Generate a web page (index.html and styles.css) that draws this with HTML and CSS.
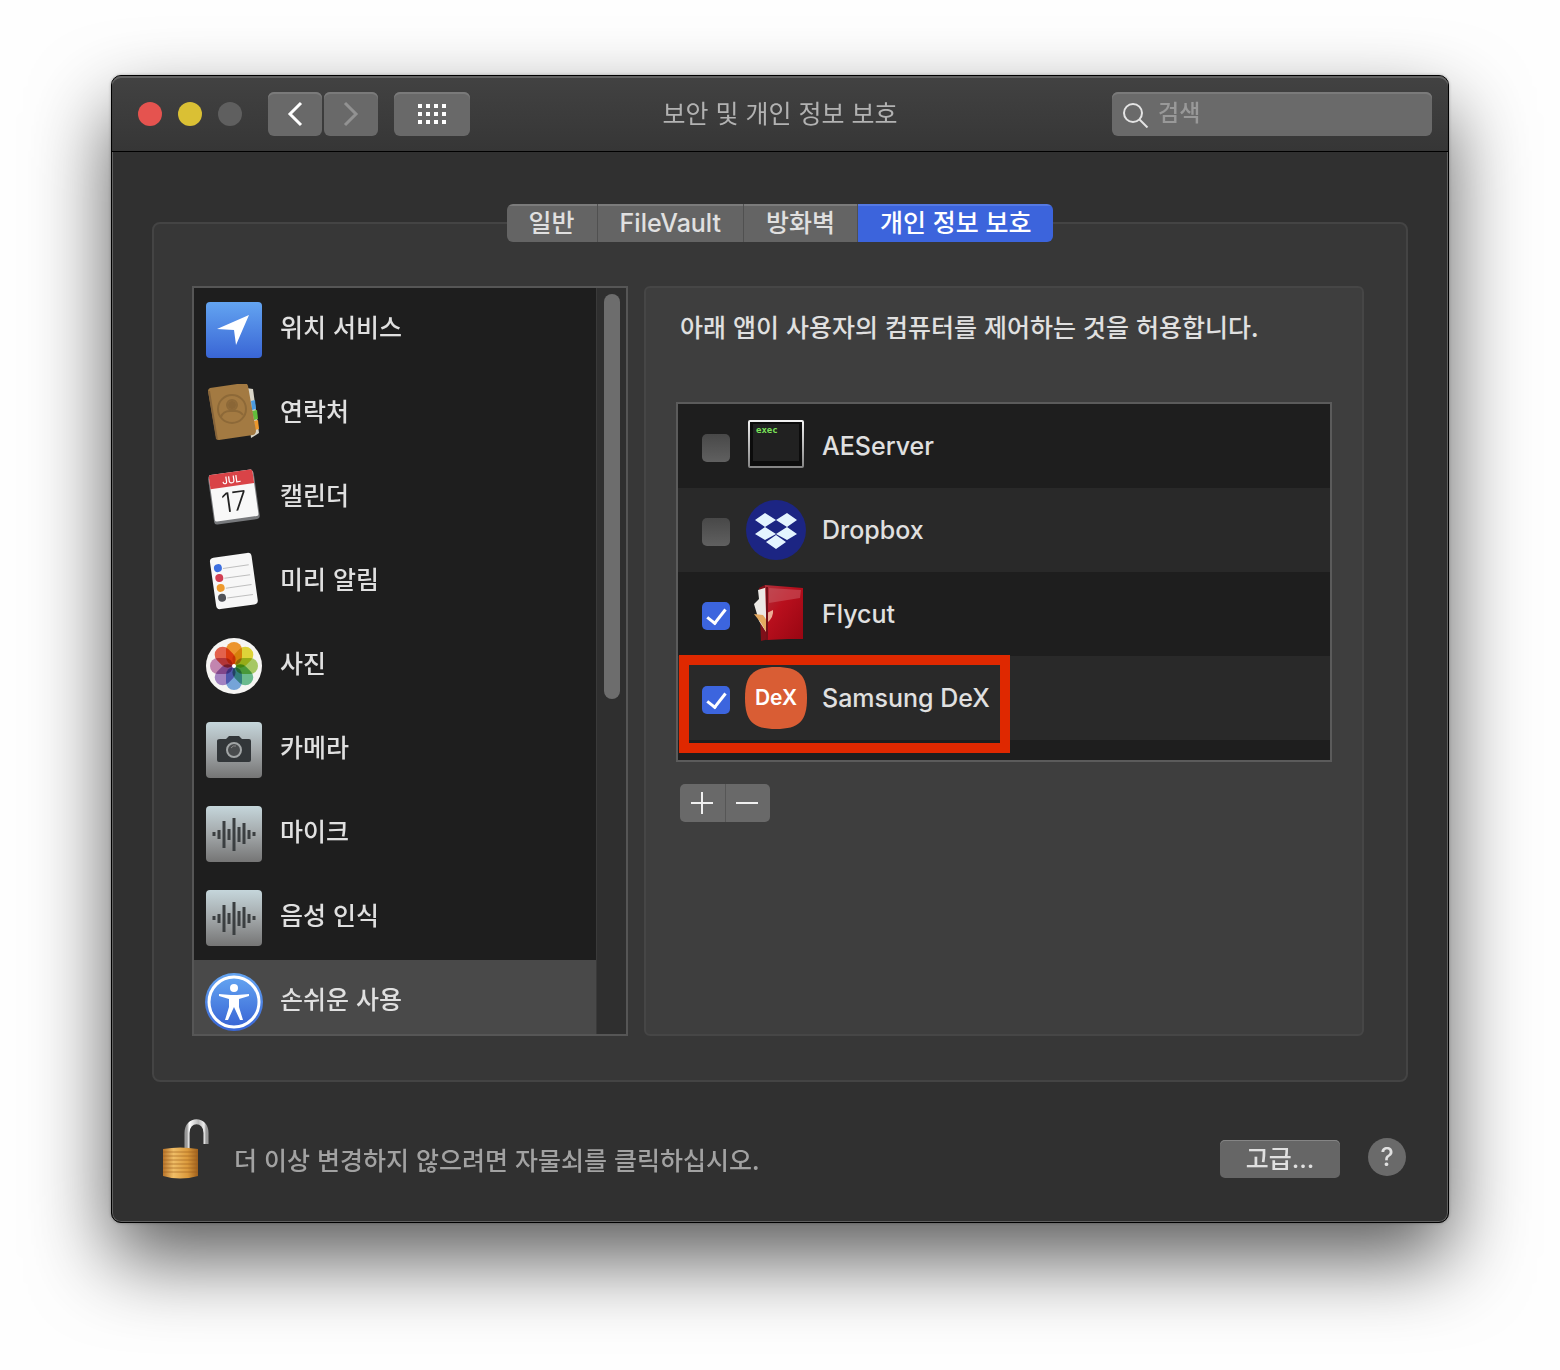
FILE: index.html
```html
<!DOCTYPE html>
<html lang="ko">
<head>
<meta charset="UTF-8">
<title>보안 및 개인 정보 보호</title>
<link rel="stylesheet" href="styles.css">
</head>
<body>
<div class="window">
	<header class="titlebar">
		<div class="controls">
			<div class="lights">
				<button type="button" class="light close" aria-label="닫기"></button>
				<button type="button" class="light minimize" aria-label="최소화"></button>
				<button type="button" class="light" aria-label="확대" disabled></button>
			</div>
			<div class="nav">
				<button type="button" class="navBtn" aria-label="뒤로">
					<svg width="18" height="28" viewBox="0 0 18 28"><path d="M15 3L4 14l11 11" fill="none" stroke="#fff" stroke-width="3"/></svg>
				</button>
				<button type="button" class="navBtn" aria-label="앞으로" disabled>
					<svg width="18" height="28" viewBox="0 0 18 28"><path d="M3 3l11 11L3 25" fill="none" stroke="#929292" stroke-width="3"/></svg>
				</button>
			</div>
			<button type="button" class="navBtn gridBtn" aria-label="모두 보기">
				<svg width="30" height="22" viewBox="0 0 30 22"><path d="M1 3h28M1 11h28M1 19h28" stroke="#fff" stroke-width="4" stroke-dasharray="4"/></svg>
			</button>
		</div>
		<h1 class="title">보안 및 개인 정보 보호</h1>
		<label class="search">
			<svg width="28" height="28" viewBox="0 0 28 28"><g fill="none" stroke="#e4e4e4" stroke-width="2"><circle cx="11" cy="13" r="9"/><path d="M17.500 19.500l8 8"/></g></svg>
			<input type="search" placeholder="검색" aria-label="검색">
		</label>
	</header>

	<main class="content">
		<div class="tabs">
			<button type="button" class="tab">일반</button>
			<button type="button" class="tab">FileVault</button>
			<button type="button" class="tab">방화벽</button>
			<button type="button" class="tab active">개인 정보 보호</button>
		</div>

		<section class="panel">
			<div class="sidebar">
				<ul class="services">
					<li><button type="button" class="service">
						<svg class="icon" viewBox="0 0 60 60">
							<defs><linearGradient id="blue" x2="0" y2="1"><stop stop-color="#63a4f1"/><stop offset="1" stop-color="#3965d5"/></linearGradient></defs>
							<rect x="2" y="2" width="56" height="56" rx="4" fill="url(#blue)"/>
							<path d="M45 15L13 29l17 1 2 15z" fill="#fff"/>
						</svg>
						<span>위치 서비스</span></button></li>
					<li><button type="button" class="service">
						<svg class="icon" viewBox="0 0 60 60">
							<path d="M42 4l7 1 6 44-8 5z" fill="#d9d5c8"/>
							<path d="M47 17l4-1 1 9-4 1z" fill="#4b9be0"/><path d="M48 27l5-1 1 9-4 1z" fill="#62bd3b"/>
							<path d="M50 37l4-1 1 9-4 1z" fill="#ec972c"/>
							<path d="M6 4l34-5q3 0 4 3l8 45q0 3-3 4l-34 5q-3 0-3-3L4 7q0-2 2-3z" fill="#a37a42"/>
							<path d="M4 7l8 48 2 1L6 7z" fill="#86643a"/>
							<g fill="none" stroke="#8d6938" stroke-width="2"><circle cx="28" cy="25" r="14"/><circle cx="28" cy="21" r="5"/><path d="M17 33q2-6 9-6h5q5 0 8 4"/></g>
							<circle cx="28" cy="21" r="4" fill="#8a6636"/>
						</svg>
						<span>연락처</span></button></li>
					<li><button type="button" class="service">
						<svg class="icon" viewBox="0 0 60 60">
							<g transform="rotate(-8 30 30)">
								<rect x="7" y="5" width="46" height="49" rx="3" fill="#77797c"/>
								<rect x="8" y="4" width="44" height="47" rx="2" fill="#f8f8f8"/>
								<path d="M8 18V6q0-2 2-2h40q2 0 2 2v12z" fill="#d94347"/>
								<text x="30" y="15" text-anchor="middle" class="calMonth">JUL</text>
								<text x="30" y="43" text-anchor="middle" class="calDay">17</text>
							</g>
						</svg>
						<span>캘린더</span></button></li>
					<li><button type="button" class="service">
						<svg class="icon" viewBox="0 0 60 60">
							<g transform="rotate(-8 30 30)">
								<rect x="9" y="3" width="42" height="52" rx="4" fill="#f7f7f7"/>
								<path d="M21 15h26M21 25h26M21 35h26M21 45h26" stroke="#bfbfbf"/>
								<circle cx="16" cy="14" r="4" fill="#3d6fe0"/><circle cx="16" cy="24" r="4" fill="#d23e52"/>
								<circle cx="16" cy="34" r="4" fill="#ee9a2d"/><circle cx="16" cy="44" r="4" fill="#505258"/>
							</g>
						</svg>
						<span>미리 알림</span></button></li>
					<li><button type="button" class="service">
						<svg class="icon" viewBox="0 0 60 60">
							<circle cx="30" cy="30" r="28" fill="#f6f5f3"/>
							<g class="petals">
								<rect x="22" y="6" width="16" height="23" rx="8" fill="#f59a2f"/>
								<rect x="22" y="6" width="16" height="23" rx="8" fill="#e6dc3c" transform="rotate(45 30 30)"/>
								<rect x="22" y="6" width="16" height="23" rx="8" fill="#acd068" transform="rotate(90 30 30)"/>
								<rect x="22" y="6" width="16" height="23" rx="8" fill="#6fc294" transform="rotate(135 30 30)"/>
								<rect x="22" y="6" width="16" height="23" rx="8" fill="#79abe3" transform="rotate(180 30 30)"/>
								<rect x="22" y="6" width="16" height="23" rx="8" fill="#a887cb" transform="rotate(225 30 30)"/>
								<rect x="22" y="6" width="16" height="23" rx="8" fill="#c98ab8" transform="rotate(270 30 30)"/>
								<rect x="22" y="6" width="16" height="23" rx="8" fill="#ec6650" transform="rotate(315 30 30)"/>
							</g>
							<circle cx="30" cy="30" r="2" fill="#fff"/>
						</svg>
						<span>사진</span></button></li>
					<li><button type="button" class="service">
						<svg class="icon" viewBox="0 0 60 60">
							<defs><linearGradient id="steel" x2="0" y2="1"><stop stop-color="#c5d6db"/><stop offset=".5" stop-color="#a3a8aa"/><stop offset="1" stop-color="#757575"/></linearGradient></defs>
							<rect x="2" y="2" width="56" height="56" rx="4" fill="url(#steel)"/>
							<path d="M16 19h6l3-3h10l3 3h7q2 0 2 2v19q0 2-2 2H15q-2 0-2-2V21q0-2 3-2z" fill="#323639"/>
							<circle cx="30" cy="30" r="7" fill="#484b4d" stroke="#a1a5a6" stroke-width="2"/>
							<path d="M27 28q2-3 5-2" fill="none" stroke="#888"/>
						</svg>
						<span>카메라</span></button></li>
					<li><button type="button" class="service">
						<svg class="icon" viewBox="0 0 60 60">
							<rect x="2" y="2" width="56" height="56" rx="4" fill="url(#steel)"/>
							<path class="wave" d="M10 28v4M15 26v9M20 17v27M25 25v11M30 14v33M35 23v15M40 19v21M45 26v9M50 28v4"/>
						</svg>
						<span>마이크</span></button></li>
					<li><button type="button" class="service">
						<svg class="icon" viewBox="0 0 60 60">
							<rect x="2" y="2" width="56" height="56" rx="4" fill="url(#steel)"/>
							<path class="wave" d="M10 28v4M15 26v9M20 17v27M25 25v11M30 14v33M35 23v15M40 19v21M45 26v9M50 28v4"/>
						</svg>
						<span>음성 인식</span></button></li>
					<li><button type="button" class="service selected">
						<svg class="icon" viewBox="0 0 60 60">
							<circle cx="30" cy="30" r="29" fill="url(#blue)"/>
							<circle cx="30" cy="30" r="25" fill="url(#blue)" stroke="#fff" stroke-width="3"/>
							<circle cx="30" cy="16" r="4" fill="#fff"/>
							<path d="M15 22l12 1h6l12-1v2l-10 3v8l4 13h-3l-6-13-6 13h-3l4-13v-8l-10-3z" fill="#fff"/>
						</svg>
						<span>손쉬운 사용</span></button></li>
				</ul>
				<div class="scrollbar"><div class="thumb"></div></div>
			</div>

			<div class="detail">
				<p class="guide">아래 앱이 사용자의 컴퓨터를 제어하는 것을 허용합니다.</p>
				<ul class="apps">
					<li class="app">
						<label>
							<input type="checkbox" class="check">
							<svg class="appIcon" viewBox="0 0 62 62">
								<defs><linearGradient id="frame" x2="0" y2="1"><stop stop-color="#f2f2f2"/><stop offset="1" stop-color="#858585"/></linearGradient></defs>
								<rect x="4" y="6" width="54" height="46" rx="1" fill="#0c0c0c" stroke="url(#frame)" stroke-width="2"/>
								<rect x="8" y="9" width="46" height="37" fill="#212121"/>
								<text x="11" y="18" class="exec">exec</text>
							</svg>
							<span>AEServer</span>
						</label>
					</li>
					<li class="app">
						<label>
							<input type="checkbox" class="check">
							<svg class="appIcon" viewBox="0 0 62 62">
								<circle cx="31" cy="31" r="30" fill="#1c2583"/>
								<path d="M20 14l11 7-11 7-10-7zM42 14l10 7-10 7-11-7zM20 28l11 7-11 6-10-6zM42 28l10 7-10 6-11-6zM31 36l10 7-10 7-10-7z" fill="#e4f4ff"/>
							</svg>
							<span>Dropbox</span>
						</label>
					</li>
					<li class="app">
						<label>
							<input type="checkbox" class="check" checked>
							<svg class="appIcon" viewBox="0 0 62 62">
								<defs><linearGradient id="red" x2="1" y2="1"><stop stop-color="#b0323c"/><stop offset=".4" stop-color="#b80f1d"/><stop offset="1" stop-color="#980612"/></linearGradient></defs>
								<path d="M14 5l6-3 4 54-8 2z" fill="#7f1019"/>
								<path d="M13 7l10-3v48L14 38l-5-17 5-5z" fill="#eceae6"/>
								<path d="M9 31l9 1 5 7v13l-7-12z" fill="#e5a960"/>
								<path d="M20 2l38 3v51H43l-21 1z" fill="url(#red)"/>
								<path d="M24 5l32 2-1 8-31 5z" fill="#cd6269" opacity=".5"/>
								<path d="M22 30l6-3q1 7-6 13z" fill="#ecac95"/>
								<path d="M22 4v53" stroke="#741018" stroke-width="2"/>
							</svg>
							<span>Flycut</span>
						</label>
					</li>
					<li class="app highlighted">
						<label>
							<input type="checkbox" class="check" checked>
							<svg class="appIcon" viewBox="0 0 62 62">
								<path d="M31 0C54 0 62 8 62 31S54 62 31 62 0 54 0 31 8 0 31 0z" fill="#d95d34"/>
								<text x="31" y="38" text-anchor="middle" class="dex">DeX</text>
							</svg>
							<span>Samsung DeX</span>
						</label>
					</li>
				</ul>
				<div class="editBtns">
					<button type="button" aria-label="추가"><svg width="24" height="24" viewBox="0 0 24 24"><path d="M0 12h22M11 1v22" stroke="#f0f0f0" stroke-width="2"/></svg></button>
					<button type="button" aria-label="제거"><svg width="24" height="24" viewBox="0 0 24 24"><path d="M0 12h22" stroke="#f0f0f0" stroke-width="2"/></svg></button>
				</div>
			</div>
		</section>
	</main>

	<footer class="bottom">
		<button type="button" class="lock" aria-label="잠금">
			<svg width="48" height="62" viewBox="0 0 48 62">
				<defs>
					<linearGradient id="gold"><stop stop-color="#b8742a"/><stop offset=".3" stop-color="#efbd66"/><stop offset=".7" stop-color="#db9a3c"/><stop offset="1" stop-color="#9f601d"/></linearGradient>
					<linearGradient id="chrome"><stop stop-color="#999"/><stop offset=".12" stop-color="#fff"/><stop offset=".6" stop-color="#b7b7b7"/><stop offset=".9" stop-color="#eee"/><stop offset="1" stop-color="#999"/></linearGradient>
				</defs>
				<path d="M25 31V15C25 0 44 0 44 15v11" fill="none" stroke="url(#chrome)" stroke-width="5"/>
				<path d="M1 31q17-3 35 0v27q-18 5-35 0z" fill="url(#gold)"/>
				<path d="M1 34h35M1 38h35M1 42h35M1 46h35M1 50h35M1 54h35" stroke="#9b5d1d" opacity=".6"/>
			</svg>
		</button>
		<p class="lockText">더 이상 변경하지 않으려면 자물쇠를 클릭하십시오.</p>
		<button type="button" class="advanced">고급...</button>
		<button type="button" class="help" aria-label="도움말">?</button>
	</footer>
</div>
</body>
</html>
```

FILE: styles.css
```css
* {
	margin: 0;
	padding: 0;
	box-sizing: border-box;
}

body {
	padding: 75px 111px 147px;
	background: #fefefe;
	color: #e0e0e0;
	font-family: Inter, "Noto Sans CJK KR", sans-serif;
	font-size: 25px;
	font-weight: 500;
	line-height: 36px;
}

button, input {
	font: inherit;
	color: inherit;
	border: none;
	outline: none;
}

ul {
	list-style: none;
}

svg {
	display: block;
	flex-shrink: 0;
}

.window {
	border: 1px solid #000;
	border-radius: 10px;
	background: #303030;
	box-shadow: inset 0 0 0 1px #606060, 0 0 3px rgba(0, 0, 0, 0.3), 0 36px 80px rgba(0, 0, 0, 0.64);
}

/* 상단 바 */
.titlebar {
	display: grid;
	grid-template-columns: 1fr auto 1fr;
	align-items: center;
	padding: 16px 16px 15px;
	border-bottom: 1px solid #000;
	border-radius: 9px 9px 0 0;
	background: linear-gradient(#424242, #363636);
	box-shadow: inset 0 2px 0 #636363;
}

.controls, .lights, .nav {
	display: flex;
	align-items: center;
}

.controls {
	gap: 16px;
}

.lights {
	gap: 16px;
	margin: 0 10px;
}

.light {
	width: 24px;
	height: 24px;
	border-radius: 50%;
	background: #5f5f5f;
}

.close {
	background: #e5534f;
}

.minimize {
	background: #dac034;
}

.nav {
	gap: 2px;
}

.navBtn {
	display: flex;
	align-items: center;
	justify-content: center;
	width: 54px;
	height: 44px;
	border-radius: 6px;
	background: #696969;
	box-shadow: inset 0 2px 0 #7a7a7a;
}

.gridBtn {
	width: 76px;
}

.title, .guide, .service span, .lockText {
	font-family: "Noto Sans CJK KR", sans-serif;
}

.title {
	padding-bottom: 4px;
	color: #b2b2b2;
	font-size: 25px;
	font-weight: 400;
}

.search {
	display: flex;
	align-items: center;
	gap: 8px;
	justify-self: end;
	width: 320px;
	height: 44px;
	padding: 0 10px;
	border-radius: 6px;
	background: #6a6a6a;
	box-shadow: inset 0 2px 0 #7a7a7a;
}

.search input {
	flex: 1;
	min-width: 0;
	padding-bottom: 2px;
	background: none;
	font-size: 23px;
}

.search input::placeholder {
	color: #999;
}

/* 탭 */
.content {
	padding: 52px 40px 36px;
}

.tabs {
	position: relative;
	display: flex;
	width: fit-content;
	margin: 0 auto -20px;
	border-radius: 6px;
	overflow: hidden;
}

.tab {
	height: 38px;
	padding: 0 22px;
	border-right: 1px solid #505050;
	background: #646464;
	box-shadow: inset 0 2px 0 #7b7b7b;
}

.tab.active {
	border-right: none;
	background: #3c64dc;
	color: #fff;
	box-shadow: inset 0 2px 0 #5479e4;
}

.panel {
	display: flex;
	gap: 16px;
	padding: 62px 42px 44px 38px;
	border: 2px solid #444;
	border-radius: 8px;
	background: #373737;
}

/* 왼쪽 목록 */
.sidebar {
	display: flex;
	width: 436px;
	height: 750px;
	border: 2px solid #565656;
	background: #1e1e1e;
	overflow: hidden;
}

.services {
	flex: 1;
}

.service {
	display: flex;
	align-items: center;
	gap: 16px;
	width: 100%;
	height: 84px;
	padding: 0 10px;
	background: none;
}

.service.selected {
	background: #494949;
}

.service span {
	padding-bottom: 8px;
}

.icon {
	width: 60px;
	height: 60px;
}

.calMonth {
	fill: #fff;
	font-size: 10px;
}

.calDay {
	fill: #222;
	font-size: 27px;
	font-weight: 300;
}

.petals rect {
	mix-blend-mode: multiply;
}

.wave {
	stroke: #3b3f41;
	stroke-width: 3px;
}

.scrollbar {
	width: 30px;
	padding: 6px 7px;
	border-left: 1px solid #3a3a3a;
	background: #2f2f2f;
}

.thumb {
	width: 16px;
	height: 405px;
	border-radius: 8px;
	background: #6d6d6d;
}

/* 오른쪽 내용 */
.detail {
	flex: 1;
	padding: 20px 30px;
	border: 2px solid #464646;
	border-radius: 6px;
	background: #3e3e3e;
}

.guide {
	margin: 0 4px 58px;
}

.apps {
	height: 360px;
	border: 2px solid #5b5b5b;
	background: #1e1e1e;
}

.app {
	position: relative;
}

.app:nth-child(even) {
	background: #292929;
}

.app label {
	display: flex;
	align-items: center;
	gap: 15px;
	height: 84px;
	padding: 0 24px;
}

.check {
	appearance: none;
	width: 28px;
	height: 28px;
	margin-top: 4px;
	border-radius: 5px;
	background: linear-gradient(#484848, #606060);
}

.check:checked {
	background: #3c65de;
}

.check:checked::after {
	content: "";
	display: block;
	box-sizing: border-box;
	width: 11px;
	height: 19px;
	margin: 3px 9px;
	border: solid #fff;
	border-width: 0 3px 3px 0;
	transform: rotate(38deg);
}

.appIcon {
	width: 62px;
	height: 62px;
}

.exec {
	fill: #7be35a;
	font-family: "DejaVu Sans Mono", monospace;
	font-size: 9px;
	font-weight: bold;
}

.dex {
	fill: #fff;
	font-size: 21px;
	font-weight: 600;
}

/* 강조 표시 */
.highlighted::after {
	content: "";
	position: absolute;
	top: -1px;
	left: 1px;
	box-sizing: border-box;
	width: 331px;
	height: 98px;
	border: 10px solid #df2800;
	pointer-events: none;
}

.editBtns {
	display: flex;
	width: fit-content;
	margin: 22px 4px 0;
	border-radius: 5px;
	overflow: hidden;
}

.editBtns button {
	display: flex;
	align-items: center;
	justify-content: center;
	width: 45px;
	height: 38px;
	background: #696969;
}

.editBtns button + button {
	border-left: 1px solid #565656;
}

/* 하단 */
.bottom {
	display: flex;
	align-items: center;
	padding: 0 42px 42px 50px;
}

.lock {
	background: none;
}

.lockText {
	flex: 1;
	margin: 20px 24px 0;
	color: #a2a2a2;
}

.advanced {
	width: 120px;
	height: 38px;
	margin: 20px 28px 0 0;
	border-radius: 5px;
	background: #666;
	box-shadow: inset 0 1px 0 #858585;
}

.help {
	width: 38px;
	height: 38px;
	margin-top: 16px;
	border-radius: 50%;
	background: #6a6a6a;
}
```
